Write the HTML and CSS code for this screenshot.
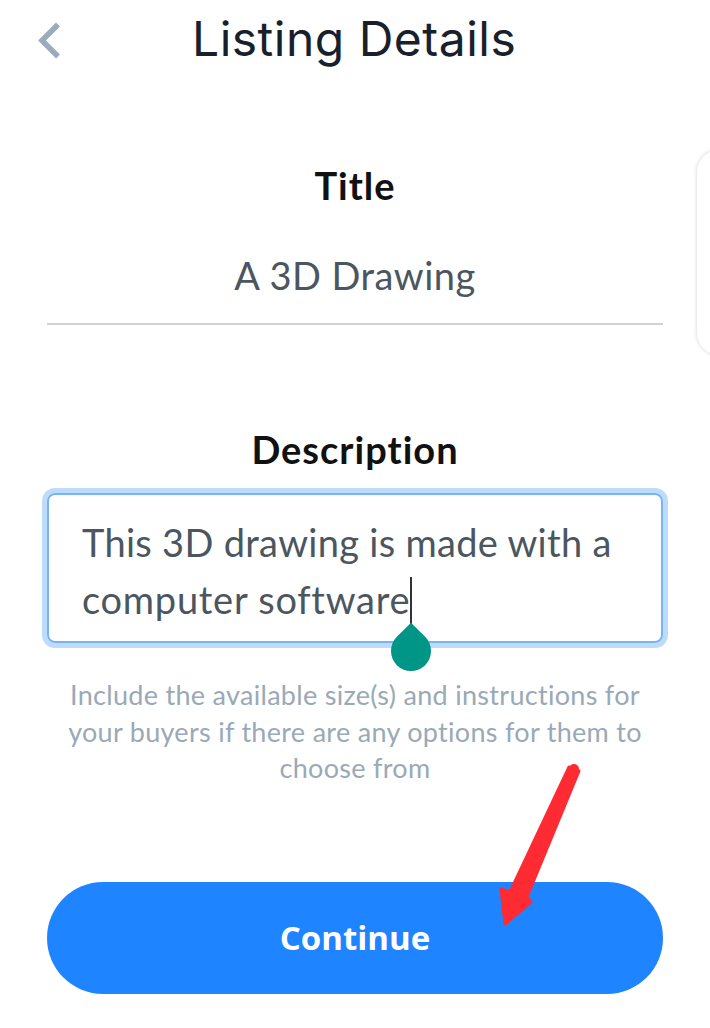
FILE: index.html
```html
<!DOCTYPE html>
<html lang="en">
<head>
<meta charset="UTF-8">
<meta name="viewport" content="width=device-width, initial-scale=1.0">
<title>Listing Details</title>
<link rel="stylesheet" href="styles.css">
</head>
<body>
<div class="screen">
    <header class="topbar">
        <svg class="back" width="26" height="38" viewBox="0 0 26 38">
            <path d="M22 3.5 L6 19.5 L22 35.5" fill="none" stroke="#9aabbb" stroke-width="5.5"/>
        </svg>
        <h1>Listing Details</h1>
    </header>

    <div class="side-card"></div>

    <div class="form">
        <label class="label title-label">Title</label>
        <div class="field">A 3D Drawing</div>

        <label class="label desc-label">Description</label>
        <div class="textarea">
            <p>This 3D drawing is made with a <span class="line2">computer software</span><span class="caret"><span class="handle"></span></span></p>
        </div>
        <p class="hint">Include the available size(s) and instructions for your buyers if there are any options for them to choose from</p>

        <button class="continue">Continue</button>
    </div>

    <!-- red pointer drawn over the button -->
    <svg class="arrow" width="710" height="1028" viewBox="0 0 710 1028">
        <polygon points="569,767 579,771 527,897 531,902 505,924 501,889 510,892"
                 fill="#ff2b33" stroke="#ff2b33" stroke-width="3" stroke-linejoin="round"/>
        <circle cx="574" cy="769" r="5" fill="#ff2b33"/>
    </svg>
</div>
</body>
</html>
```

FILE: styles.css
```css
body {
    margin: 0;
    background: #fff;
    font-family: Lato, "Open Sans", sans-serif;
}
.screen {
    position: relative;
    width: 710px;
    height: 1028px;
    overflow: hidden;
}
.topbar {
    display: flex;
    align-items: center;
    height: 82px;
    padding-left: 36px;
}
.back {
    display: block;
    margin-top: -3px;
}
.topbar h1 {
    margin: -4px 0 0 130px;
    font-family: Inter, sans-serif;
    font-weight: 400;
    font-size: 48px;
    letter-spacing: 0.5px;
    color: #17202b;
    line-height: 1;
}
.side-card {
    position: absolute;
    left: 697px;
    top: 150px;
    width: 60px;
    height: 205px;
    border-radius: 22px;
    background: #fff;
    box-shadow: 0 0 4px rgba(0, 0, 0, 0.18);
}
.form {
    display: flex;
    flex-direction: column;
    align-items: center;
    width: 616px;
    margin-left: 47px;
}
.label {
    font-weight: 700;
    font-size: 38px;
    letter-spacing: 1px;
    color: #111;
    line-height: 1;
}
.title-label {
    margin-top: 84px;
}
.field {
    align-self: stretch;
    text-align: center;
    font-size: 38px;
    letter-spacing: 0.5px;
    color: #4b5660;
    padding: 52px 0 29px;
    line-height: 1;
    border-bottom: 2px solid #cfd3d6;
}
.desc-label {
    margin-top: 105px;
}
.textarea {
    align-self: stretch;
    box-sizing: border-box;
    margin-top: 25px;
    height: 150px;
    border: 2px solid #79b3f7;
    border-radius: 8px;
    box-shadow: 0 0 0 5px #bddcfc;
}
.textarea p {
    margin: 0;
    padding: 19px 30px 0 33px;
    font-size: 38px;
    letter-spacing: 0.3px;
    line-height: 57px;
    color: #4b5660;
}
.line2 {
    letter-spacing: 0.75px;
}
.caret {
    position: relative;
    display: inline-block;
    width: 2px;
    height: 47px;
    background: #333;
    vertical-align: -10px;
}
/* selection handle hanging under the caret */
.handle {
    position: absolute;
    left: -19px;
    top: 7px;
    margin-top: 47px;
    width: 40px;
    height: 40px;
    background: #009687;
    border-radius: 0 50% 50% 50%;
    transform: rotate(45deg);
}
.hint {
    margin: 34px 0 0;
    padding: 0 18px;
    text-align: center;
    font-size: 27px;
    letter-spacing: 0.3px;
    line-height: 36.5px;
    color: #9aa9b7;
}
.continue {
    margin-top: 95px;
    width: 616px;
    height: 112px;
    border: none;
    border-radius: 56px;
    background: #1e84ff;
    color: #fff;
    font-family: "Open Sans", sans-serif;
    font-weight: 700;
    font-size: 33px;
}
.arrow {
    position: absolute;
    left: 0;
    top: 0;
    pointer-events: none;
}
```
